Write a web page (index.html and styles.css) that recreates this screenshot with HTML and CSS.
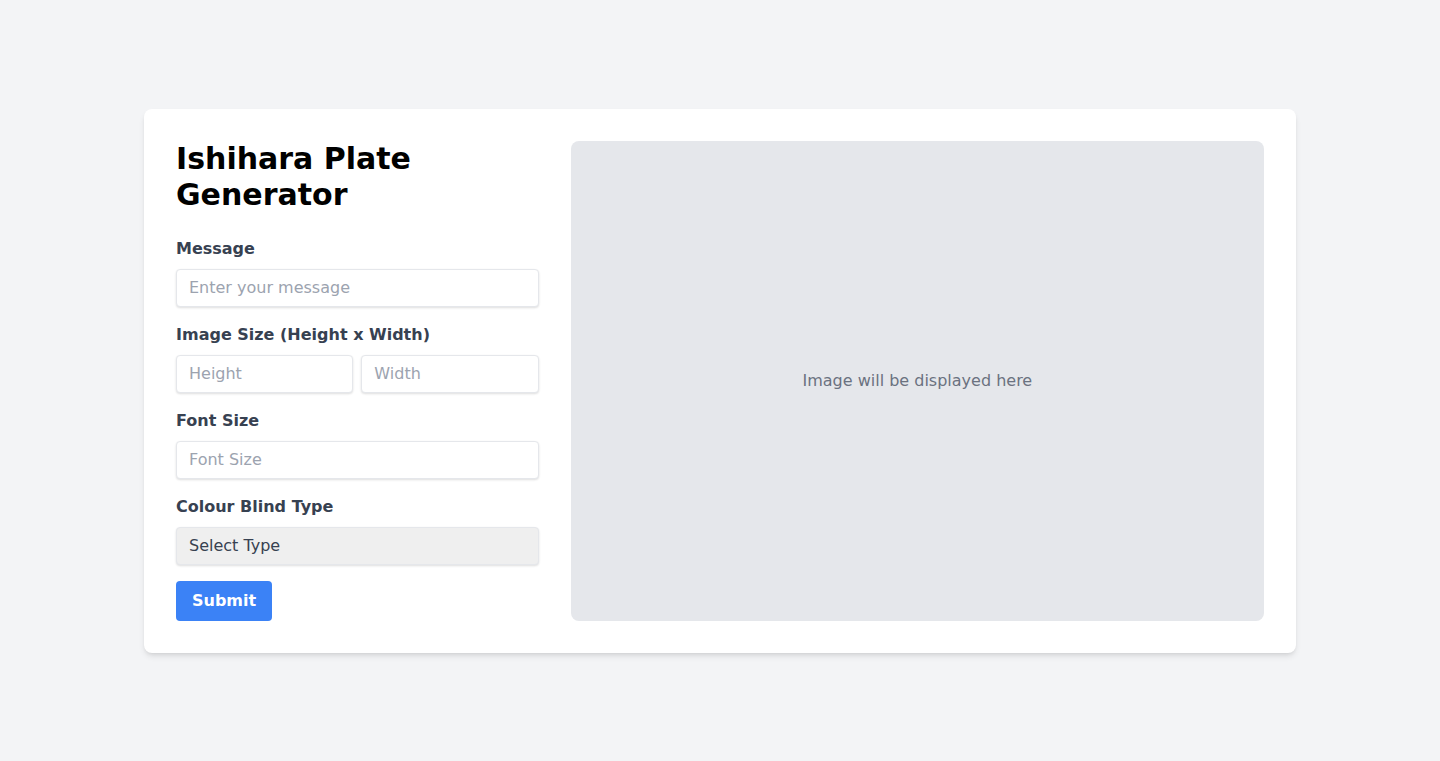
FILE: index.html
```html
<!DOCTYPE html>
<html lang="en">
<head>
<meta charset="utf-8">
<title>Ishihara Plate Generator</title>
<link rel="stylesheet" href="styles.css">
</head>
<body>
<main class="page">
  <section class="card">
    <form class="form">
      <h1 class="title">Ishihara Plate Generator</h1>
      <label class="label" for="msg">Message</label>
      <input class="input" id="msg" type="text" placeholder="Enter your message">
      <label class="label">Image Size (Height x Width)</label>
      <div class="row">
        <input class="input" type="text" placeholder="Height">
        <input class="input" type="text" placeholder="Width">
      </div>
      <label class="label" for="fs">Font Size</label>
      <input class="input" id="fs" type="text" placeholder="Font Size">
      <label class="label" for="cb">Colour Blind Type</label>
      <select class="select" id="cb">
        <option>Select Type</option>
      </select>
      <div class="actions">
        <button class="btn" type="button">Submit</button>
      </div>
    </form>
    <div class="preview">Image will be displayed here</div>
  </section>
</main>
</body>
</html>
```

FILE: styles.css
```css
* { box-sizing: border-box; }
html, body { margin: 0; padding: 0; }
body {
  background: #f3f4f6;
  font-family: "DejaVu Sans", Verdana, sans-serif;
  font-size: 16px;
  line-height: 24px;
  color: #000;
}
.page {
  min-height: 761px;
  display: flex;
  align-items: center;
  justify-content: center;
}
.card {
  width: 1152px;
  background: #fff;
  border-radius: 8px;
  box-shadow: 0 4px 6px -1px rgba(0,0,0,0.1), 0 2px 4px -2px rgba(0,0,0,0.1);
  padding: 32px;
  display: flex;
  gap: 32px;
}
.form {
  width: 362.67px;
  flex: none;
  display: flex;
  flex-direction: column;
}
.title {
  margin: 0 0 24px;
  font-size: 30px;
  line-height: 36px;
  font-weight: 700;
  color: #000;
}
.label {
  display: block;
  font-weight: 700;
  color: #374151;
  font-size: 16px;
  line-height: 24px;
  margin-bottom: 8px;
}
.input, .select {
  display: block;
  width: 100%;
  height: 38px;
  margin: 0 0 16px;
  padding: 0 12px;
  font-family: inherit;
  font-size: 16px;
  color: #374151;
  background: #fff;
  border: 1px solid #e5e7eb;
  border-radius: 4px;
  box-shadow: 0 1px 2px 0 rgba(0,0,0,0.08), 0 1px 3px 0 rgba(0,0,0,0.06);
  outline: none;
}
.input::placeholder { color: #9ca3af; }
.row {
  display: flex;
  gap: 8px;
}
.row .input { flex: 1 1 0; width: auto; min-width: 0; }
.select {
  -webkit-appearance: none;
  appearance: none;
  background: #efefef;
  color: #374151;
}
.actions { display: flex; }
.btn {
  height: 40px;
  padding: 0 16px;
  font-family: inherit;
  font-size: 16px;
  font-weight: 700;
  color: #fff;
  background: #3b82f6;
  border: none;
  border-radius: 4px;
}
.preview {
  flex: 1;
  background: #e5e7eb;
  border-radius: 8px;
  display: flex;
  align-items: center;
  justify-content: center;
  color: #6b7280;
  font-size: 16px;
}
```
